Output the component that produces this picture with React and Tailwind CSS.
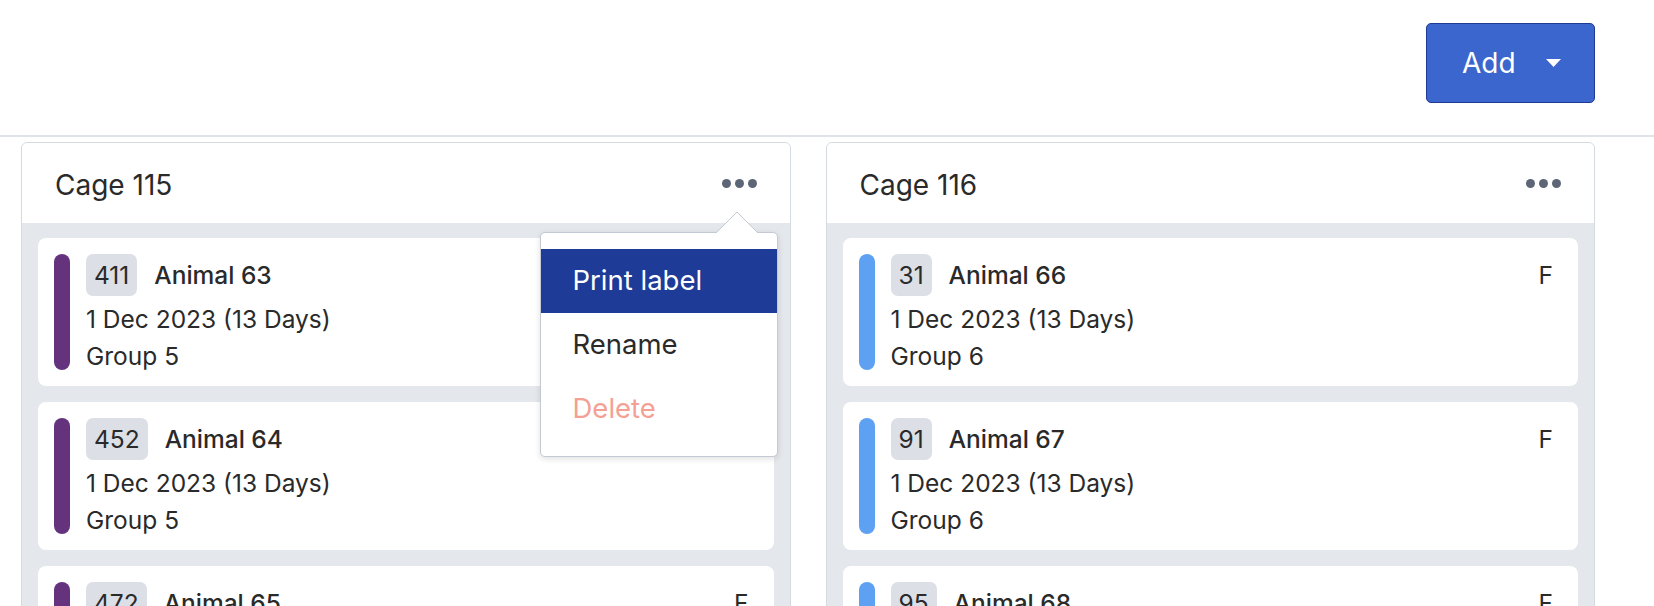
import { useState } from "react";

const cages = [
  {
    name: "Cage 115",
    bar: "bg-[#65327e]",
    animals: [
      { tag: "411", name: "Animal 63", sex: "F", group: "Group 5" },
      { tag: "452", name: "Animal 64", sex: "F", group: "Group 5" },
      { tag: "472", name: "Animal 65", sex: "F", group: "Group 5" },
    ],
  },
  {
    name: "Cage 116",
    bar: "bg-[#5ea1f3]",
    animals: [
      { tag: "31", name: "Animal 66", sex: "F", group: "Group 6" },
      { tag: "91", name: "Animal 67", sex: "F", group: "Group 6" },
      { tag: "95", name: "Animal 68", sex: "F", group: "Group 6" },
    ],
  },
];

function Dots() {
  return (
    <button className="flex items-center gap-[4px] py-2">
      <span className="w-[9px] h-[9px] rounded-full bg-[#5d6676]" />
      <span className="w-[9px] h-[9px] rounded-full bg-[#5d6676]" />
      <span className="w-[9px] h-[9px] rounded-full bg-[#5d6676]" />
    </button>
  );
}

function AnimalCard({ animal, bar }) {
  return (
    <div className="bg-white rounded-[8px] h-[148px] shrink-0 p-[16px] flex gap-[16px]">
      <div className={`w-[16px] rounded-full ${bar}`} />
      <div className="flex-1 flex flex-col text-[24.5px] text-[#2a2a2a]">
        <div className="flex items-center h-[42px] shrink-0">
          <span className="h-[42px] px-[8px] rounded-[7px] bg-[#dcdfe5] flex items-center">
            {animal.tag}
          </span>
          <span className="ml-[17px] font-medium">{animal.name}</span>
          <span className="ml-auto mr-[9px]">{animal.sex}</span>
        </div>
        <div className="mt-[5px] leading-[37px] shrink-0">1 Dec 2023 (13 Days)</div>
        <div className="leading-[37px] shrink-0">{animal.group}</div>
      </div>
    </div>
  );
}

function ActionMenu() {
  return (
    <div className="absolute right-[12px] top-[89px] w-[238px] z-10">
      {/* arrow */}
      <svg
        className="absolute -top-[20px] left-[176px]"
        width="42"
        height="21"
        viewBox="0 0 42 21"
      >
        <path d="M0 21 L21 0 L42 21" fill="white" stroke="#c3cad3" strokeWidth="1" />
      </svg>
      <div className="bg-white border border-[#c3cad3] rounded-[5px] shadow-[0_2px_6px_rgba(0,0,0,0.12)] pt-[16px] pb-[15px] text-[27.5px]">
        <div className="h-[64px] px-[32px] flex items-center bg-[#1e3b98] text-white">
          Print label
        </div>
        <div className="h-[64px] px-[32px] flex items-center text-[#2a2a2a]">
          Rename
        </div>
        <div className="h-[64px] px-[32px] flex items-center text-[#f3a194]">
          Delete
        </div>
      </div>
    </div>
  );
}

export default function App() {
  const [openMenu, setOpenMenu] = useState(0);

  return (
    <div
      className="w-[1654px] h-[606px] overflow-hidden bg-white"
      style={{ fontFamily: "Inter, 'Noto Sans', sans-serif" }}
    >
      <div className="h-[137px] border-b-2 border-[#dfe3e8] flex justify-end items-start pt-[23px] pr-[59px]">
        <button className="w-[169px] h-[80px] bg-[#3b66cd] border border-[#1f3a93] rounded-[5px] flex items-center justify-between pl-[35px] pr-[33px] text-white text-[28px]">
          <span>Add</span>
          <svg width="15" height="8" viewBox="0 0 15 8">
            <path d="M0 0 L15 0 L7.5 8 Z" fill="white" />
          </svg>
        </button>
      </div>

      <div className="flex gap-[35px] pl-[21px] pr-[59px] pt-[5px]">
        {cages.map((cage, i) => (
          <div
            key={cage.name}
            className="relative flex-1 border border-[#d5dae1] rounded-[6px] h-[480px]"
          >
            <div className="h-[80px] flex items-center justify-between pl-[33px] pr-[33px] text-[28px] text-[#2a2a2a] bg-white rounded-t-[6px]">
              <span className="mt-[4px]">{cage.name}</span>
              <div onClick={() => setOpenMenu(openMenu === i ? -1 : i)}>
                <Dots />
              </div>
            </div>
            <div className="bg-[#e4e7eb] h-[400px] px-[16px] pt-[15px] flex flex-col gap-[16px] overflow-hidden">
              {cage.animals.map((a) => (
                <AnimalCard key={a.tag} animal={a} bar={cage.bar} />
              ))}
            </div>
            {openMenu === i && <ActionMenu />}
          </div>
        ))}
      </div>
    </div>
  );
}
